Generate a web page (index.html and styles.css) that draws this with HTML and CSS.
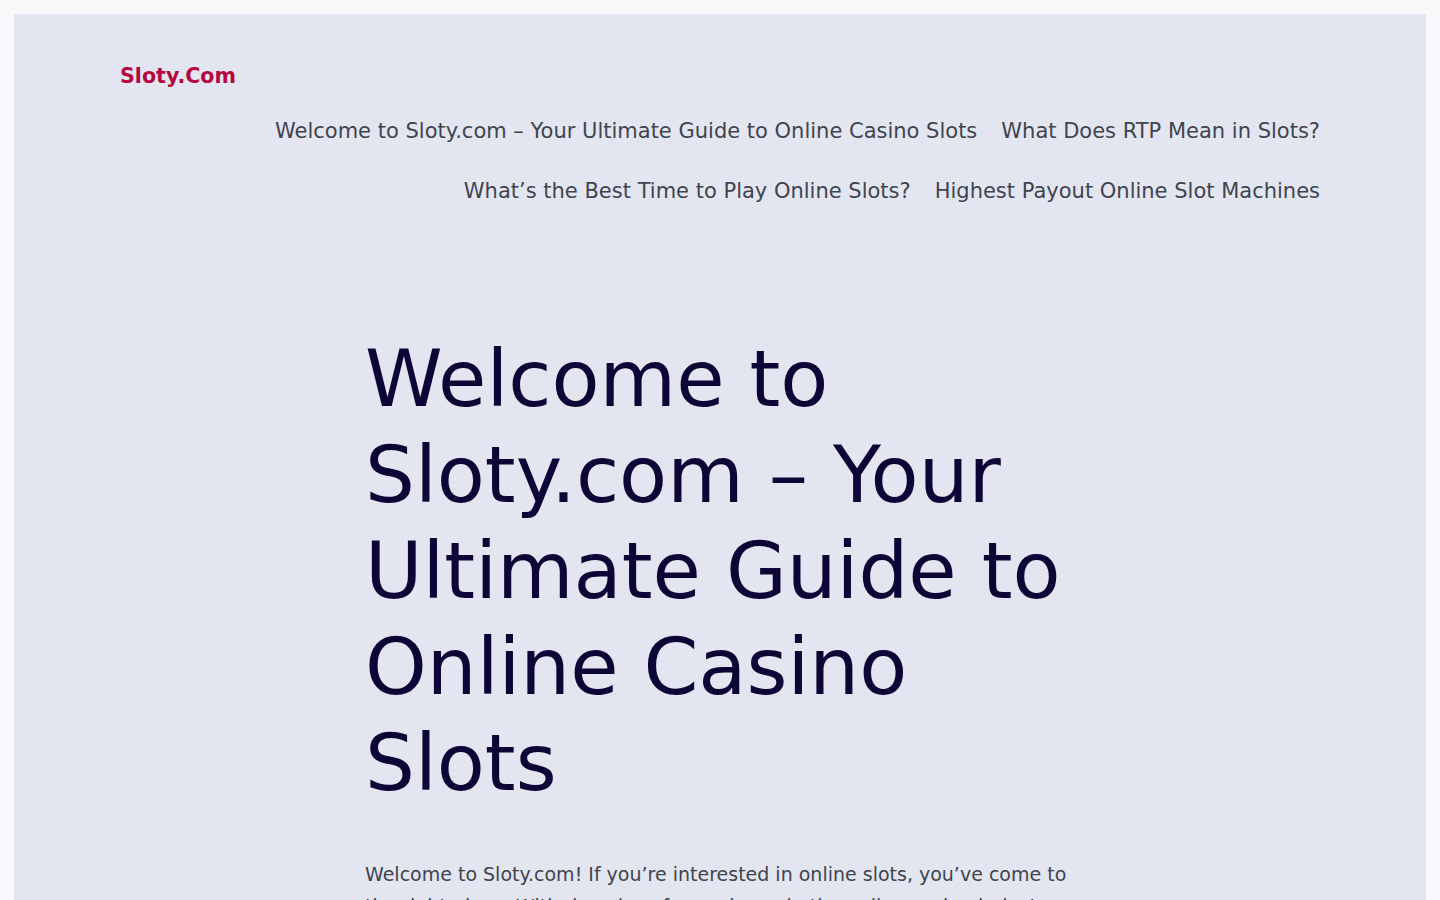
FILE: index.html
```html
<!DOCTYPE html>
<html lang="en">
<head>
<meta charset="utf-8">
<title>Sloty.Com</title>
<link rel="stylesheet" href="styles.css">
</head>
<body>
<div class="site">
  <header class="site-header">
    <a class="logo" href="#">Sloty.Com</a>
    <nav class="nav">
      <a href="#">Welcome to Sloty.com – Your Ultimate Guide to Online Casino Slots</a>
      <a href="#">What Does RTP Mean in Slots?</a>
      <a href="#">What’s the Best Time to Play Online Slots?</a>
      <a href="#">Highest Payout Online Slot Machines</a>
    </nav>
  </header>
  <main class="content">
    <h1 class="title">Welcome to Sloty.com – Your Ultimate Guide to Online Casino Slots</h1>
    <p class="intro">Welcome to Sloty.com! If you’re interested in online slots, you’ve come to the right place. With decades of experience in the online casino industry, we bring you everything you need to know about slots.</p>
  </main>
</div>
</body>
</html>
```
FILE: styles.css
```css
html, body {
  margin: 0;
  padding: 0;
}
body {
  background: #f8f8fb;
  font-family: "DejaVu Sans", sans-serif;
  padding: 14px 14px 0;
  overflow: hidden;
  height: 900px;
  box-sizing: border-box;
}
.site {
  background: #e3e6f1;
  min-height: 900px;
  padding: 50px 106px 0;
  box-shadow: 0 0 1px rgba(0,0,0,0.08);
}
.site-header {
  display: flex;
  flex-direction: column;
}
.logo {
  color: #b5073f;
  font-weight: bold;
  font-size: 20.6px;
  text-decoration: none;
  line-height: 24px;
  align-self: flex-start;
}
.nav {
  display: flex;
  flex-wrap: wrap;
  justify-content: flex-end;
  column-gap: 24px;
  row-gap: 0;
  margin-top: 13px;
}
.nav a {
  color: #40444f;
  font-size: 21px;
  line-height: 60px;
  text-decoration: none;
}
.content {
  width: 710px;
  margin: 110px auto 0;
}
.title {
  color: #0c0536;
  font-weight: normal;
  font-size: 78.6px;
  line-height: 96px;
  margin: 0;
}
.intro {
  color: #40444f;
  font-size: 19px;
  line-height: 32px;
  margin: 47px 0 0;
}
```
